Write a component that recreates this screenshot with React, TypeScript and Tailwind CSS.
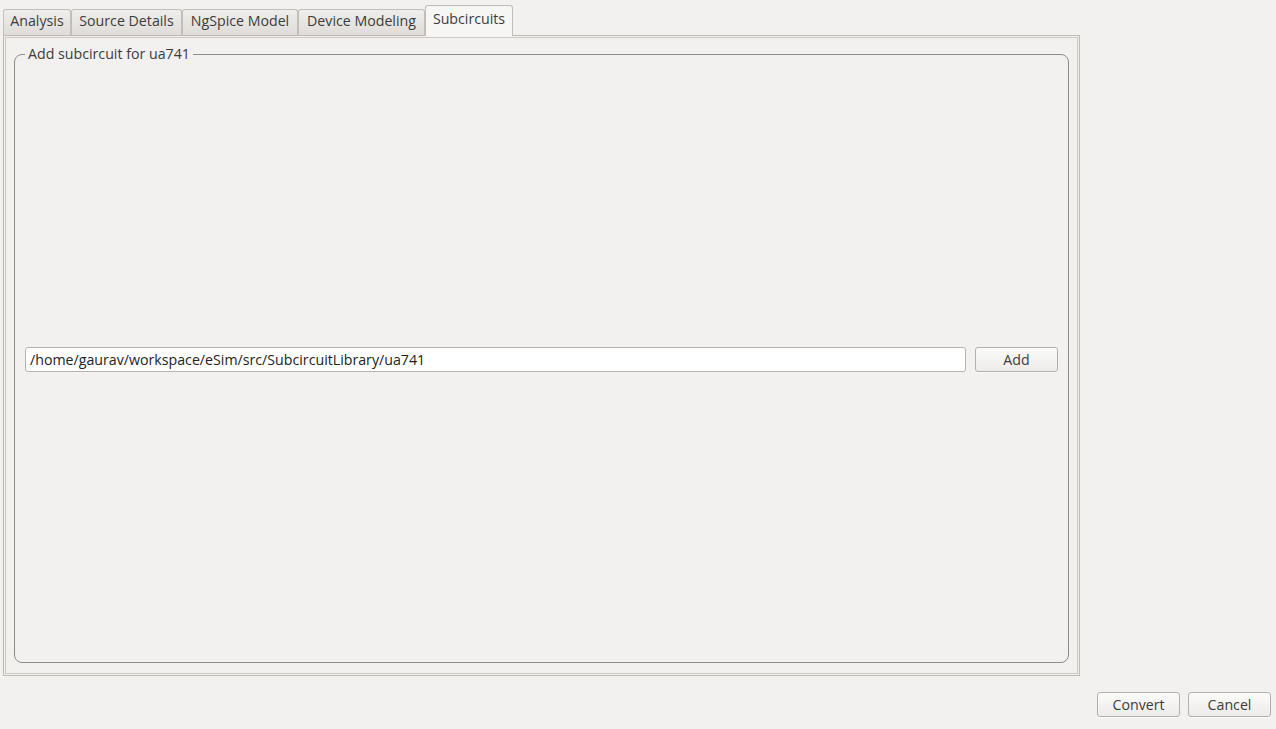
import React from 'react';

const tabs = [
  { label: 'Analysis', w: 'w-[68px]' },
  { label: 'Source Details', w: 'w-[111px]' },
  { label: 'NgSpice Model', w: 'w-[116px]' },
  { label: 'Device Modeling', w: 'w-[127px]' },
];

function Button({ children, className = '' }: { children: React.ReactNode; className?: string }) {
  return (
    <button
      className={`h-[25px] w-[83px] rounded-[3px] border border-[#b3afa9] bg-gradient-to-b from-[#fbfbfa] to-[#ecebe9] text-[14.2px] text-[#3c3c3c] shadow-[0_1px_0_rgba(255,255,255,0.8)] ${className}`}
    >
      {children}
    </button>
  );
}

export default function App() {
  return (
    <div
      className="h-[729px] w-[1276px] bg-[#f2f1f0] text-[#3c3c3c] overflow-hidden"
      style={{ fontFamily: '"Open Sans", "DejaVu Sans", sans-serif' }}
    >
      <div className="flex flex-col pl-[3px] pt-[5px]">
        {/* tab bar */}
        <div className="flex items-end h-[30px]">
          {tabs.map((t) => (
            <div
              key={t.label}
              className={`${t.w} h-[26px] flex items-center justify-center rounded-t-[3px] border border-b-0 border-[#c1bdb8] bg-gradient-to-b from-[#efeeec] to-[#dfdcd9] text-[14.2px] whitespace-nowrap pb-[3px]`}
            >
              {t.label}
            </div>
          ))}
          <div className="w-[88px] h-[31px] -mb-px z-10 flex items-center justify-center rounded-t-[3px] border border-b-0 border-[#c1bdb8] bg-[#f6f6f5] text-[14.2px] whitespace-nowrap pb-[4px]">
            Subcircuits
          </div>
        </div>

        {/* tab pane */}
        <div className="w-[1077px] h-[641px] border border-[#bdb9b4] p-px">
          <div className="h-full w-full border border-[#cdcac6] px-[8px] pt-[7px] pb-[10px]">
            <fieldset className="h-[618px] rounded-[8px] border border-[#8f8d8a] px-[10px] flex">
              <legend className="px-[3px] text-[14.2px] leading-[18px]">Add subcircuit for ua741</legend>
              <div className="flex-1 flex items-center gap-[9px] pb-[6px]">
                <div className="flex-1 h-[25px] rounded-[3px] border border-[#b6b2ad] bg-white flex items-center px-[4px] text-[14.2px] text-[#222]">
                  /home/gaurav/workspace/eSim/src/SubcircuitLibrary/ua741
                </div>
                <Button>Add</Button>
              </div>
            </fieldset>
          </div>
        </div>
      </div>

      {/* dialog buttons */}
      <div className="flex justify-end gap-[8px] pr-[5px] pt-[16px]">
        <Button>Convert</Button>
        <Button>Cancel</Button>
      </div>
    </div>
  );
}
